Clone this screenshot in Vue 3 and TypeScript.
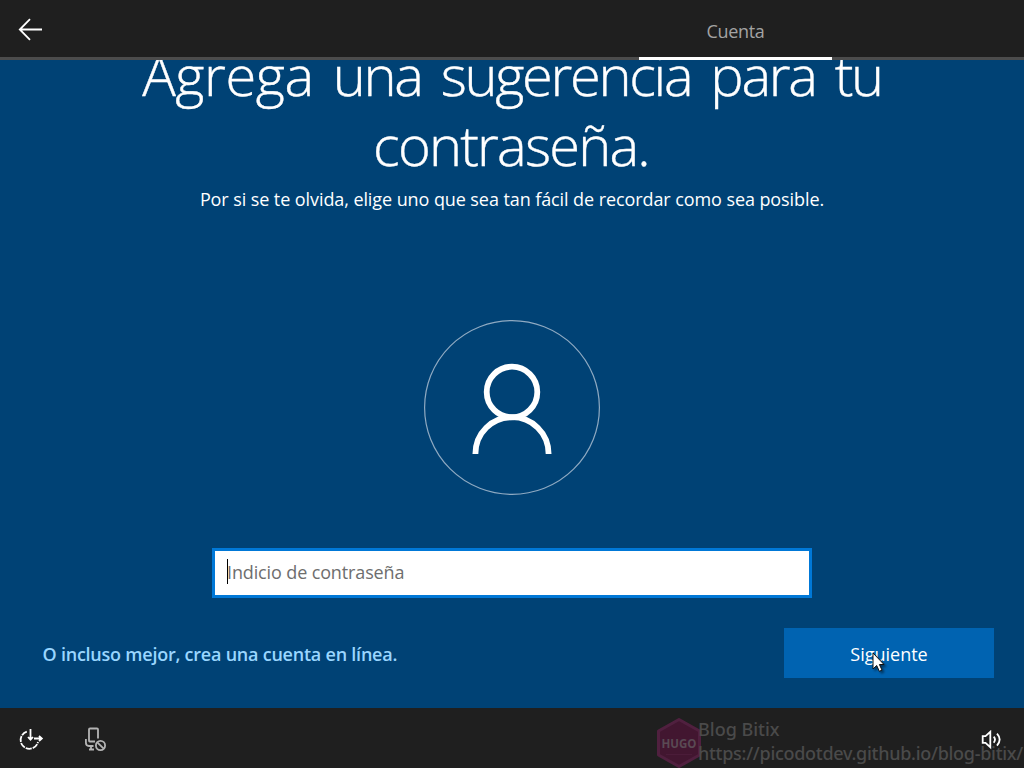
<script setup lang="ts">
import { ref } from 'vue'

const hint = ref<string>('')
</script>

<template>
  <div class="setup">
    <header class="topbar">
      <button class="back" aria-label="Atrás">
        <svg width="26" height="24" viewBox="0 0 26 24" fill="none" stroke="#fff" stroke-width="1.8">
          <path d="M24 12.500H2M12 2.200 1.800 12.500 12 22.800" />
        </svg>
      </button>
      <div class="tab"><span>Cuenta</span></div>
    </header>

    <main class="content">
      <h1 class="title">
        <span class="title-line"><span class="lead">Agrega</span> una sugerencia para tu</span>
        <span class="title-line second">contraseña.</span>
      </h1>
      <p class="subtitle"><span>Por si se te olvida, elige uno que sea tan fácil de recordar como sea posible.</span></p>
      <svg class="avatar" width="176" height="176" viewBox="0 0 176 176" fill="none">
        <ellipse cx="88" cy="87.5" rx="87.4" ry="86.9" stroke="#8faac2" stroke-width="1.2" />
        <g stroke="#fff" stroke-width="5.8">
          <circle cx="88" cy="72" r="25.3" />
          <path d="M51.4 134C51.4 113 68 97.2 88 97.2S124.600 113 124.600 134" />
        </g>
      </svg>
      <label class="field">
        <i class="caret"></i>
        <input v-model="hint" placeholder="Indicio de contraseña" />
      </label>
      <div class="actions">
        <a class="online">O incluso mejor, crea una cuenta en línea.</a>
        <button class="next"><span>Siguiente</span></button>
      </div>
    </main>

    <footer class="bottombar">
      <svg class="ease" width="26" height="24" viewBox="0 0 26 24" fill="none" stroke="#fff" stroke-width="1.8">
        <path d="M7.800 3.600A8.800 8.800 0 1 0 19 14" stroke-dasharray="6 1" />
        <path d="M11.500 1V11.500M9 9 11.500 11.600 14 9M15 10.500H22.500M20 8 22.800 10.500 20 13" />
      </svg>
      <svg class="mic" width="24" height="26" viewBox="0 0 24 26" fill="none" stroke="#b4b4b4" stroke-width="1.800">
        <path d="M11 15.500H5.700Q5 15.500 5 14.500V3.500Q5 2.500 6 2.500H13Q14 2.500 14 3.500V12.500" />
        <path d="M1.900 13V16.500Q1.900 20 4.900 20H9.500M7 20V23.500M5 23.500H10" />
        <circle cx="16.500" cy="19.500" r="4.600" />
        <path d="M13.300 16.300 19.700 22.700" />
      </svg>
      <svg class="sound" width="22" height="20" viewBox="0 0 22 20" fill="none" stroke="#fff" stroke-width="1.800">
        <path d="M1.700 6.200H4.500L9.300 1.800V17.200L4.500 12.800H1.700Z" />
        <path d="M12.700 6.600Q15.300 9.500 12.700 12.800M16 3.700Q21.300 9.500 16 15.700" />
      </svg>
    </footer>

    <div class="watermark">
      <svg width="44" height="50" viewBox="0 0 44 50">
        <path d="M22 1.500 42.500 13V37L22 48.500 1.500 37V13Z" fill="#421630" stroke="#50203f" stroke-width="3" stroke-linejoin="round" />
        <text x="22" y="29.500" text-anchor="middle" textLength="35" lengthAdjust="spacingAndGlyphs">HUGO</text>
        <path d="M9 36.500H35" stroke="#4b1c39" />
      </svg>
      <div class="credit">
        <span>Blog Bitix</span>
        <span class="url">https://picodotdev.github.io/blog-bitix/</span>
      </div>
    </div>

    <svg class="pointer" width="18" height="24" viewBox="0 0 18 24">
      <path d="M1 1V17L4.700 13.500 7.300 19.300 10 18.100 7.400 12.500H12Z" fill="#fff" stroke="#111" stroke-width="1" />
    </svg>
  </div>
</template>

<style>
body {
  margin: 0;
  overflow: hidden;
}
</style>

<style scoped>
.setup {
  position: relative;
  display: flex;
  flex-direction: column;
  width: 1024px;
  height: 768px;
  overflow: hidden;
  background: #004275;
  color: #fff;
  font-family: "Open Sans", "Noto Sans", sans-serif;
}
button {
  padding: 0;
  border: 0;
  background: none;
  color: inherit;
  font: inherit;
}
.topbar {
  box-sizing: border-box;
  flex: none;
  display: flex;
  justify-content: space-between;
  height: 60px;
  padding: 0 192px 0 18px;
  background: #1f1f1f;
  box-shadow: inset 0 -3px #4c4c4c;
}
.back {
  align-self: flex-start;
  height: 24px;
  margin-top: 17px;
}
.back svg {
  display: block;
}
.tab {
  box-sizing: border-box;
  width: 193px;
  height: 60px;
  border-bottom: 3px solid #fff;
  color: #a3a3a3;
  font-size: 18px;
  letter-spacing: -0.3px;
  line-height: 62px;
  text-align: center;
}
.content {
  flex: none;
  display: flex;
  flex-direction: column;
  align-items: center;
  height: 648px;
  overflow: hidden;
}
.title {
  flex: none;
  margin: -21px 0 0;
  font-size: 56px;
  font-weight: 300;
  letter-spacing: -2.3px;
  word-spacing: 6.8px;
  line-height: 70px;
  text-align: center;
  -webkit-text-stroke: 0.4px #fff;
}
.title-line {
  display: block;
  white-space: nowrap;
}
.lead {
  letter-spacing: -0.4px;
}
.second {
  margin-left: -2px;
  letter-spacing: -1.8px;
}
.subtitle {
  flex: none;
  margin: 6px 0 0;
  font-size: 18px;
  letter-spacing: -0.085px;
  line-height: 28px;
  white-space: nowrap;
}
.avatar {
  flex: none;
  margin-top: 107px;
}
.field {
  position: relative;
  box-sizing: border-box;
  flex: none;
  width: 600px;
  height: 50px;
  margin-top: 52px;
  border: 3px solid #0078d7;
  background: #fff;
}
.field input {
  box-sizing: border-box;
  width: 100%;
  height: 44px;
  padding: 0 12px 2px;
  border: 0;
  outline: 0;
  background: none;
  font: 18px "Open Sans", sans-serif;
  letter-spacing: -0.13px;
}
.field input::placeholder {
  color: #6e6e6e;
}
.caret {
  position: absolute;
  left: 12px;
  top: 8px;
  width: 1px;
  height: 25px;
  background: #000;
}
.actions {
  box-sizing: border-box;
  flex: none;
  display: flex;
  justify-content: space-between;
  width: 100%;
  margin-top: 30px;
  padding: 0 30px 0 42.500px;
}
.online {
  color: #99d6ff;
  font-size: 18px;
  font-weight: 600;
  letter-spacing: -0.23px;
  line-height: 52px;
}
.next {
  width: 210px;
  height: 50px;
  background: #0063b1;
  font-size: 18px;
  line-height: 52px;
}
.bottombar {
  box-sizing: border-box;
  flex: none;
  display: flex;
  align-items: flex-start;
  height: 60px;
  padding: 0 21px 0 19px;
  background: #1f1f1f;
}
.ease {
  margin-top: 20px;
}
.mic {
  margin: 18px 0 0 39px;
}
.sound {
  margin: 22px 0 0 auto;
}
.watermark {
  position: absolute;
  left: 657px;
  top: 718px;
  display: flex;
}
.watermark svg {
  flex: none;
}
.watermark text {
  fill: #5a4a54;
  font: 700 12px "Open Sans", sans-serif;
}
.credit {
  display: flex;
  flex-direction: column;
  margin: -1px 0 0 -3px;
  color: #4a4a4a;
  font: 500 18px/24px "Noto Sans", sans-serif;
  white-space: nowrap;
}
.url {
  letter-spacing: -0.28px;
}
.pointer {
  position: absolute;
  left: 872px;
  top: 652px;
  filter: drop-shadow(2px 2px 1px rgba(0, 0, 0, 0.45));
}
</style>
